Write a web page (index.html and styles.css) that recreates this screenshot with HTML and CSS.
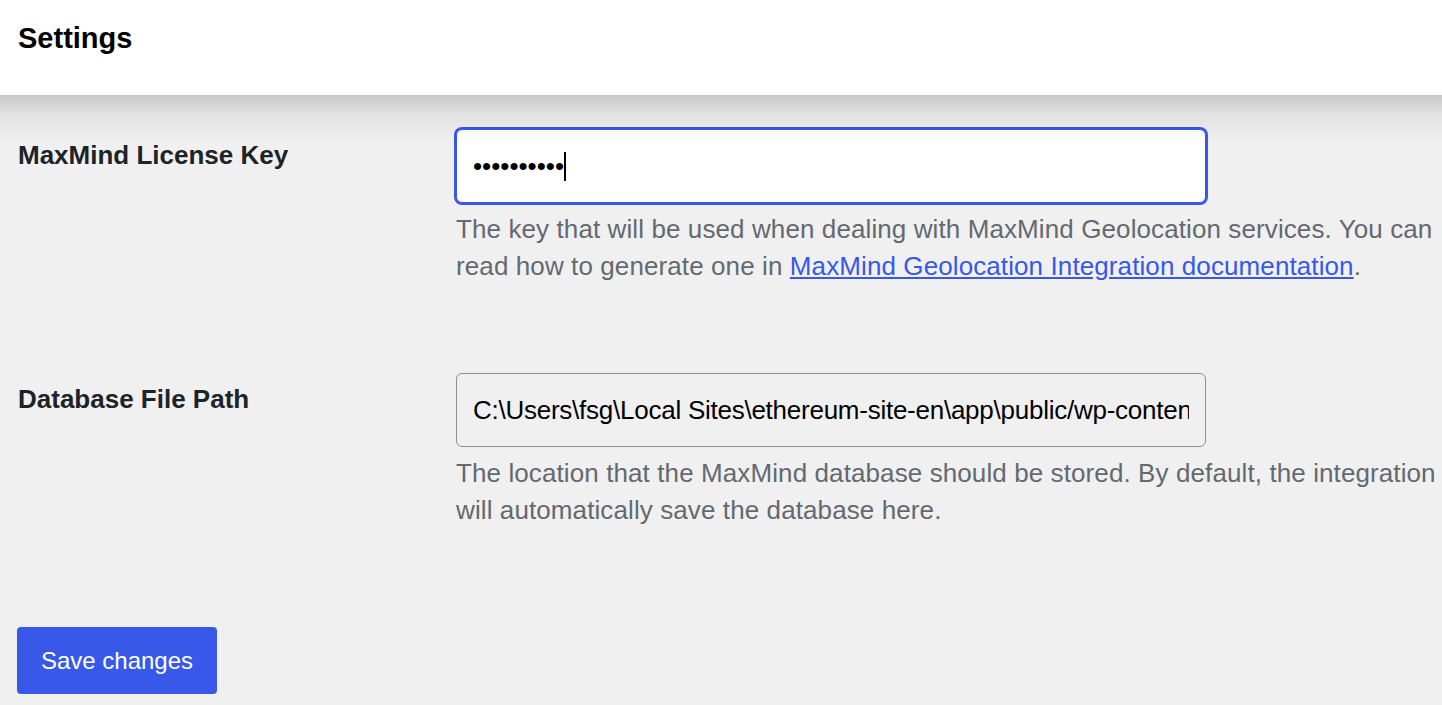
FILE: index.html
```html
<!DOCTYPE html>
<html lang="en">
<head>
<meta charset="utf-8">
<title>Settings</title>
<link rel="stylesheet" href="styles.css">
</head>
<body>
<header class="topbar">
  <h1 class="title">Settings</h1>
</header>
<main class="form">
  <div class="row row-first">
    <div class="label">MaxMind License Key</div>
    <div class="field">
      <div class="input input-focus"><span class="dots">••••••••••</span><span class="caret"></span></div>
      <p class="desc">The key that will be used when dealing with MaxMind Geolocation services. You can read how to generate one in <a href="#" class="link">MaxMind Geolocation Integration documentation</a>.</p>
    </div>
  </div>
  <div class="row row-second">
    <div class="label">Database File Path</div>
    <div class="field">
      <div class="input input-readonly"><span class="value">C:\Users\fsg\Local Sites\ethereum-site-en\app\public/wp-content/uploads/woocommerce_uploads/GeoLite2-Country.mmdb</span></div>
      <p class="desc">The location that the MaxMind database should be stored. By default, the integration will automatically save the database here.</p>
    </div>
  </div>
  <div class="actions">
    <button class="btn" type="button">Save changes</button>
  </div>
</main>
</body>
</html>
```

FILE: styles.css
```css
* { box-sizing: border-box; }
html, body {
  margin: 0;
  padding: 0;
  background: #f0f0f1;
  font-family: "Liberation Sans", Arial, sans-serif;
  overflow: hidden;
}
.topbar {
  position: relative;
  z-index: 2;
  height: 95px;
  background: #fff;
  padding: 18px 18px 0;
}
.topbar::after {
  content: "";
  position: absolute;
  left: 0;
  right: 0;
  top: 100%;
  height: 48px;
  background: linear-gradient(to bottom, rgba(0, 0, 0, 0.17), rgba(0, 0, 0, 0.06) 40%, rgba(0, 0, 0, 0));
  pointer-events: none;
}
.title {
  margin: 0;
  font-size: 29px;
  line-height: 40px;
  font-weight: 700;
  color: #000;
}
.form {
  padding: 0 18px;
}
.row {
  display: flex;
}
.row-first { padding-top: 34px; }
.row-second { padding-top: 88px; }
.label {
  width: 438px;
  flex: none;
  padding-top: 8px;
  font-size: 26px;
  line-height: 37px;
  font-weight: 700;
  color: #1d2327;
}
.field {
  width: 986px;
  flex: none;
}
.input {
  width: 750px;
  height: 74px;
  border-radius: 6px;
  padding: 0 16px;
  display: flex;
  align-items: center;
  font-size: 26px;
  color: #1d2327;
  white-space: nowrap;
  overflow: hidden;
}
.input-focus {
  background: #fff;
  border: 1px solid #3858e9;
  box-shadow: 0 0 0 2px #3858e9;
}
.dots {
  color: #000;
}
.caret {
  display: inline-block;
  width: 2px;
  height: 29px;
  background: #000;
}
.input-readonly {
  background: #f0f0f1;
  border: 1px solid #8c8f94;
  color: #000;
}
.value {
  display: block;
  flex: 1;
  min-width: 0;
  overflow: hidden;
  letter-spacing: -0.25px;
}
.desc {
  margin: 8px 0 0;
  font-size: 26px;
  line-height: 37px;
  letter-spacing: 0.1px;
  color: #646970;
}
.link {
  color: #3858e9;
  text-decoration: underline;
}
.actions {
  padding-top: 98px;
}
.btn {
  width: 200px;
  height: 67px;
  border: none;
  border-radius: 4px;
  background: #3858e9;
  color: #fff;
  font-family: "Liberation Sans", Arial, sans-serif;
  font-size: 24px;
  padding: 0;
  margin-left: -1px;
}
```
